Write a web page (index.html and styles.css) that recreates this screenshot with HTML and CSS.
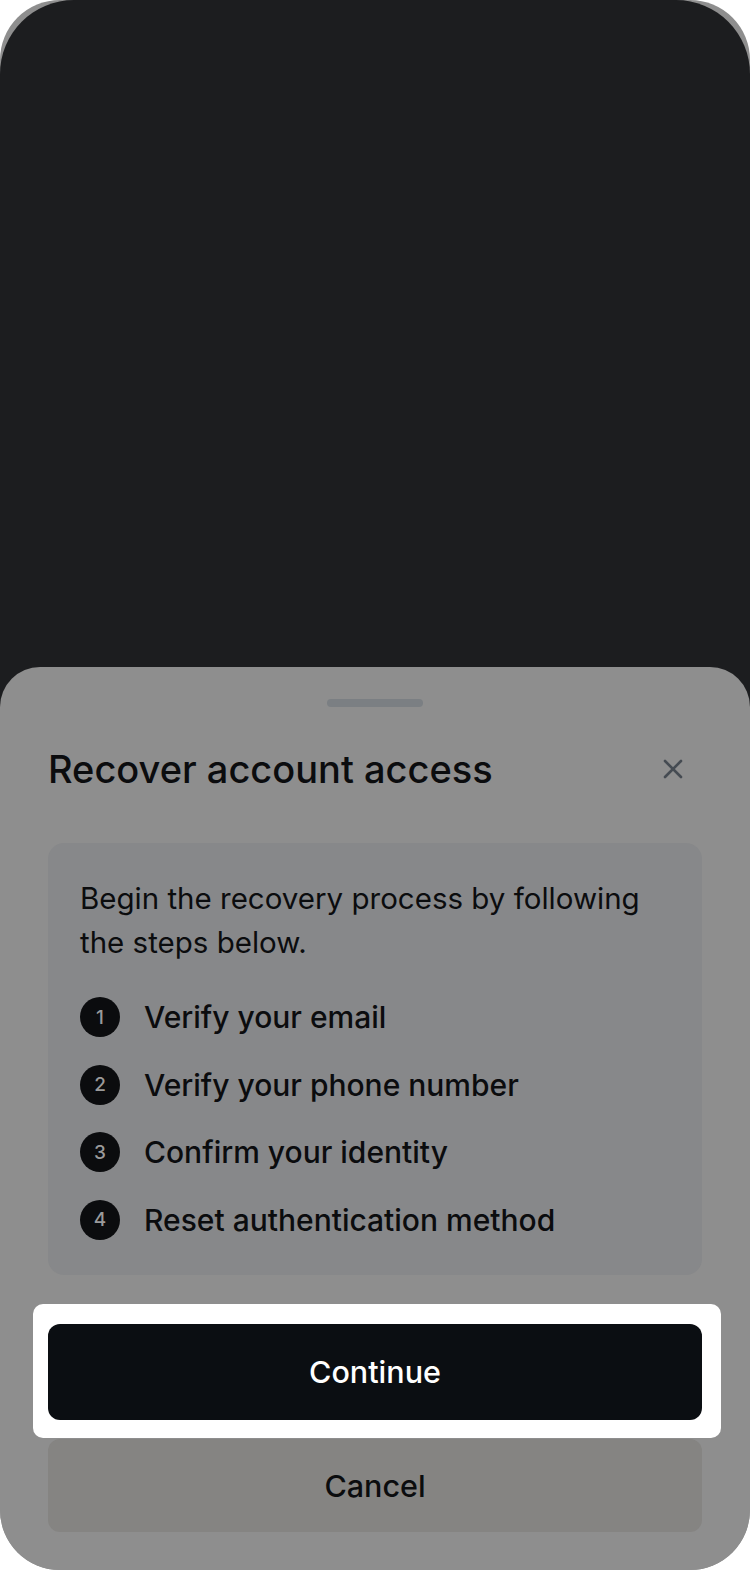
FILE: index.html
```html
<!DOCTYPE html>
<html lang="en">
<head>
  <meta charset="UTF-8">
  <title>Recover account access</title>
  <link rel="stylesheet" href="styles.css">
</head>
<body>
  <div class="phone">
    <!-- dimmed app behind the sheet -->
    <div class="backdrop"></div>

    <section class="sheet">
      <div class="handle"></div>

      <div class="sheet-header">
        <h1>Recover account access</h1>
        <button class="close" aria-label="Close">
          <svg width="24" height="24" viewBox="0 0 24 24" fill="none" stroke="#454b52" stroke-width="2.6" stroke-linecap="round">
            <path d="M4 4 L20 20 M20 4 L4 20"/>
          </svg>
        </button>
      </div>

      <div class="card">
        <p class="intro">Begin the recovery process by following the steps below.</p>
        <ol class="steps">
          <li><span class="num">1</span>Verify your email</li>
          <li><span class="num">2</span>Verify your phone number</li>
          <li><span class="num">3</span>Confirm your identity</li>
          <li><span class="num">4</span>Reset authentication method</li>
        </ol>
      </div>

      <div class="spotlight">
        <button class="btn btn-primary">Continue</button>
      </div>
      <button class="btn btn-secondary">Cancel</button>
    </section>
  </div>
</body>
</html>
```

FILE: styles.css
```css
body {
  margin: 0;
  background: #fff;
  font-family: Inter, "Noto Sans", Arial, sans-serif;
  color: #0b0c0e;
}
.phone {
  width: 750px;
  height: 1570px;
  background: #8e8e8e;
  border-radius: 60px;
  overflow: hidden;
  display: flex;
  flex-direction: column;
}
/* dark app area, the sheet slides over its bottom edge */
.backdrop {
  height: 707px;
  flex-shrink: 0;
  background: #1c1d1f;
  border-radius: 74px 74px 0 0;
}
.sheet {
  margin-top: -40px;
  background: #8e8e8e;
  border-radius: 40px 40px 0 0;
  padding: 0 48px;
  flex: 1;
}
.handle {
  width: 96px;
  height: 8px;
  border-radius: 4px;
  background: #7b7f83;
  margin: 32px auto 0;
}
.sheet-header {
  display: flex;
  align-items: center;
  justify-content: space-between;
  margin-top: 40px;
  height: 44px;
}
.sheet-header h1 {
  margin: 0;
  font-size: 38px;
  font-weight: 500;
  line-height: 44px;
}
.close {
  width: 40px;
  height: 40px;
  margin-right: 9px;
  padding: 0;
  border: 0;
  background: none;
  display: flex;
  align-items: center;
  justify-content: center;
}
.card {
  margin-top: 52px;
  background: #87888a;
  border-radius: 16px;
  padding: 33px 32px 35px;
}
.intro {
  margin: 0;
  font-size: 29.5px;
  line-height: 44px;
}
.steps {
  list-style: none;
  margin: 33px 0 0;
  padding: 0;
  display: flex;
  flex-direction: column;
  gap: 27.5px;
}
.steps li {
  display: flex;
  align-items: center;
  height: 40px;
  font-size: 30px;
  font-weight: 500;
}
.num {
  width: 40px;
  height: 40px;
  border-radius: 50%;
  background: #0b0c0e;
  color: #9a9a9a;
  font-size: 19px;
  display: flex;
  align-items: center;
  justify-content: center;
  margin-right: 24px;
  flex-shrink: 0;
}
/* white highlight box around the primary action */
.spotlight {
  margin: 29px -19px 0 -15px;
  padding: 20px 19px 18px 15px;
  background: #fff;
  border-radius: 10px;
}
.btn {
  display: block;
  width: 100%;
  border: 0;
  border-radius: 12px;
  font-family: inherit;
  font-size: 30.5px;
  font-weight: 500;
}
.btn-primary {
  height: 96px;
  background: #0b0e12;
  color: #fff;
}
.btn-secondary {
  height: 93px;
  margin-top: 1px;
  background: #858482;
  color: #0b0c0e;
}
```
